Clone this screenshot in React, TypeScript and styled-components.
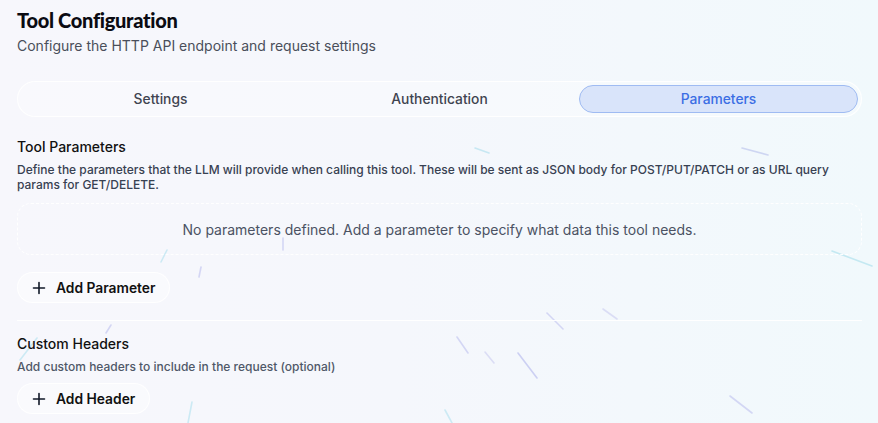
import React from "react";
import styled, {createGlobalStyle} from "styled-components";

const GlobalStyle = createGlobalStyle`
  html, body {
    margin: 0;
    padding: 0;
  }
  body {
    font-family: Inter, "Noto Sans", sans-serif;
    color: #111827;
  }
`;

const tabs = ["Settings", "Authentication", "Parameters"];

// faint streaks over the background: [x1, y1, x2, y2, colour]
const streaks: [number, number, number, number, string][] = [
    [475, 148, 489, 153, "#b9e3f0"],
    [742, 148, 768, 155, "#c3cbef"],
    [167, 250, 161, 262, "#bfe6f2"],
    [201, 267, 199, 277, "#c9ccf2"],
    [283, 238, 283, 250, "#c9ccf2"],
    [111, 325, 106, 333, "#c9ccf2"],
    [37, 338, 20, 360, "#bfe6f2"],
    [192, 402, 188, 423, "#bfe6f2"],
    [832, 251, 872, 266, "#b6e4ef"],
    [547, 313, 563, 329, "#c9ccf2"],
    [603, 309, 617, 319, "#d3d5f3"],
    [457, 337, 468, 353, "#c9ccf2"],
    [485, 352, 494, 363, "#d3d5f3"],
    [518, 353, 537, 378, "#bfc3f0"],
    [730, 396, 752, 413, "#c9ccf2"],
    [445, 410, 452, 423, "#bfe6f2"],
];

const App = () => {
    return (
        <Page>
            <GlobalStyle/>
            <Streaks width="878" height="423" viewBox="0 0 878 423">
                {streaks.map(([x1, y1, x2, y2, c], i) => (
                    <line key={i} x1={x1} y1={y1} x2={x2} y2={y2} stroke={c} strokeWidth="1.6" strokeLinecap="round"/>
                ))}
            </Streaks>
            <Content>
                <Title>Tool Configuration</Title>
                <Subtitle>Configure the HTTP API endpoint and request settings</Subtitle>

                <TabList>
                    {tabs.map((t) => (
                        <Tab key={t} active={t === "Parameters"}>{t}</Tab>
                    ))}
                </TabList>

                <Section>
                    <SectionTitle>Tool Parameters</SectionTitle>
                    <SectionText>
                        Define the parameters that the LLM will provide when calling this tool. These will be sent as JSON
                        body for POST/PUT/PATCH or as URL query params for GET/DELETE.
                    </SectionText>
                    <EmptyBox>No parameters defined. Add a parameter to specify what data this tool needs.</EmptyBox>
                    <AddButton>
                        <PlusIcon/>
                        Add Parameter
                    </AddButton>
                </Section>

                <Divider/>

                <Section>
                    <SectionTitle first>Custom Headers</SectionTitle>
                    <SectionText muted>Add custom headers to include in the request (optional)</SectionText>
                    <AddButton tight>
                        <PlusIcon/>
                        Add Header
                    </AddButton>
                </Section>
            </Content>
        </Page>
    );
};

const PlusIcon = () => (
    <svg width="14" height="14" viewBox="0 0 14 14" fill="none">
        <path d="M7 1.5v11M1.5 7h11" stroke="#111827" strokeWidth="1.6" strokeLinecap="round"/>
    </svg>
);

const Page = styled.div`
  position: relative;
  width: 878px;
  height: 423px;
  overflow: hidden;
  background: linear-gradient(90deg, #f7f7fc 0%, #f5f7fc 45%, #f1f9fc 100%);
`;

const Streaks = styled.svg`
  position: absolute;
  inset: 0;
  pointer-events: none;
  opacity: 0.75;
`;

const Content = styled.div`
  position: relative;
  display: flex;
  flex-direction: column;
  padding: 8px 16px 0 17px;
`;

const Title = styled.h1`
  margin: 0;
  font-family: Lato, Inter, sans-serif;
  font-weight: 900;
  font-size: 20px;
  line-height: 24px;
  letter-spacing: -0.3px;
  color: #0b0b12;
`;

const Subtitle = styled.p`
  margin: 4px 0 0;
  font-size: 14px;
  line-height: 20px;
  color: #4a4f5a;
`;

const TabList = styled.div`
  display: grid;
  grid-template-columns: repeat(3, 1fr);
  margin-top: 25px;
  padding: 3px;
  height: 36px;
  box-sizing: border-box;
  border: 1px solid rgba(255, 255, 255, 0.95);
  border-radius: 18px;
  background: rgba(255, 255, 255, 0.25);
`;

const Tab = styled.div<{ active?: boolean }>`
  display: flex;
  align-items: center;
  justify-content: center;
  font-size: 13.8px;
  font-weight: ${(p) => (p.active ? 500 : 450)};
  border-radius: 15px;
  color: ${(p) => (p.active ? "#3b6ee4" : "#3f4450")};
  background: ${(p) => (p.active ? "#d9e4fa" : "transparent")};
  border: 1px solid ${(p) => (p.active ? "#9fbbf2" : "transparent")};
`;

const Section = styled.div`
  display: flex;
  flex-direction: column;
  align-items: flex-start;
`;

const SectionTitle = styled.h2<{ first?: boolean }>`
  margin: ${(p) => (p.first ? "14px" : "21px")} 0 0;
  font-size: 14px;
  font-weight: 500;
  line-height: 18px;
  color: #111;
`;

const SectionText = styled.p<{ muted?: boolean }>`
  margin: 6px 0 0;
  font-size: 12px;
  line-height: 15px;
  font-weight: 500;
  color: ${(p) => (p.muted ? "#4f5868" : "#384152")};
`;

const EmptyBox = styled.div`
  margin-top: 11px;
  align-self: stretch;
  height: 52px;
  box-sizing: border-box;
  display: flex;
  align-items: center;
  justify-content: center;
  border: 1px dashed rgba(255, 255, 255, 0.95);
  border-radius: 14px;
  font-size: 14px;
  color: #4b5263;
`;

const AddButton = styled.button<{ tight?: boolean }>`
  margin-top: ${(p) => (p.tight ? "9px" : "17px")};
  display: flex;
  align-items: center;
  gap: 10px;
  height: 31px;
  padding: 0 14px 0 14px;
  border: 1px solid rgba(255, 255, 255, 0.95);
  border-radius: 16px;
  background: rgba(255, 255, 255, 0.35);
  font-family: Inter, sans-serif;
  font-size: 13.8px;
  font-weight: 600;
  color: #111;
`;

const Divider = styled.div`
  height: 1px;
  margin-top: 17px;
  background: rgba(255, 255, 255, 0.95);
`;

export default App;
